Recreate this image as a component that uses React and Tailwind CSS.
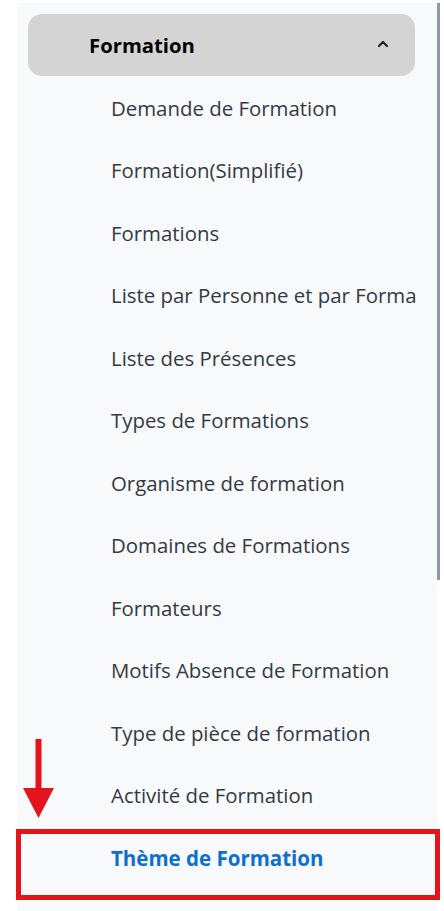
export default function App() {
  const items = [
    "Demande de Formation",
    "Formation(Simplifié)",
    "Formations",
    "Liste par Personne et par Forma",
    "Liste des Présences",
    "Types de Formations",
    "Organisme de formation",
    "Domaines de Formations",
    "Formateurs",
    "Motifs Absence de Formation",
    "Type de pièce de formation",
    "Activité de Formation",
  ];
  return (
    <div className="relative w-[444px] h-[911px] bg-white overflow-hidden" style={{ fontFamily: '"Open Sans", "Noto Sans", sans-serif' }}>
      <div className="flex h-full pt-[3px] pl-[17px]">
        <div className="w-[420px] h-full bg-[#f8f9fb] flex flex-col overflow-hidden">
          <div className="ml-[11px] mt-[11px] w-[387px] h-[62px] shrink-0 rounded-[14px] bg-[#d4d4d4] flex items-center justify-between pl-[61px] pr-[26px]">
            <span className="text-[20.3px] font-bold text-black">Formation</span>
            <svg width="12" height="8" viewBox="0 0 12 8" className="mt-[-2px]">
              <path d="M2 6 L6 2 L10 6" fill="none" stroke="#222" strokeWidth="2.2" strokeLinecap="round" strokeLinejoin="round" />
            </svg>
          </div>
          <div className="mt-px flex flex-col">
            {items.map((t) => (
              <div key={t} className="h-[62.5px] shrink-0 flex items-center pl-[94px] text-[20.4px] text-[#333a44] whitespace-nowrap">
                {t}
              </div>
            ))}
            <div className="h-[62.5px] shrink-0 flex items-center pl-[94px] text-[20.5px] font-bold text-[#0b6fd4] whitespace-nowrap">
              Thème de Formation
            </div>
          </div>
        </div>
        <div className="w-[3px] h-[577px] bg-[#8b98a9]" />
      </div>
      <div className="absolute left-[16px] top-[829px] w-[424px] h-[71px] border-[5px] border-[#e3141b]" />
      <svg className="absolute left-[23px] top-[739px]" width="32" height="80" viewBox="0 0 32 80">
        <rect x="12.5" y="0" width="6" height="50" fill="#e3141b" />
        <polygon points="0,49 31,49 15.5,79" fill="#e3141b" />
      </svg>
    </div>
  );
}
